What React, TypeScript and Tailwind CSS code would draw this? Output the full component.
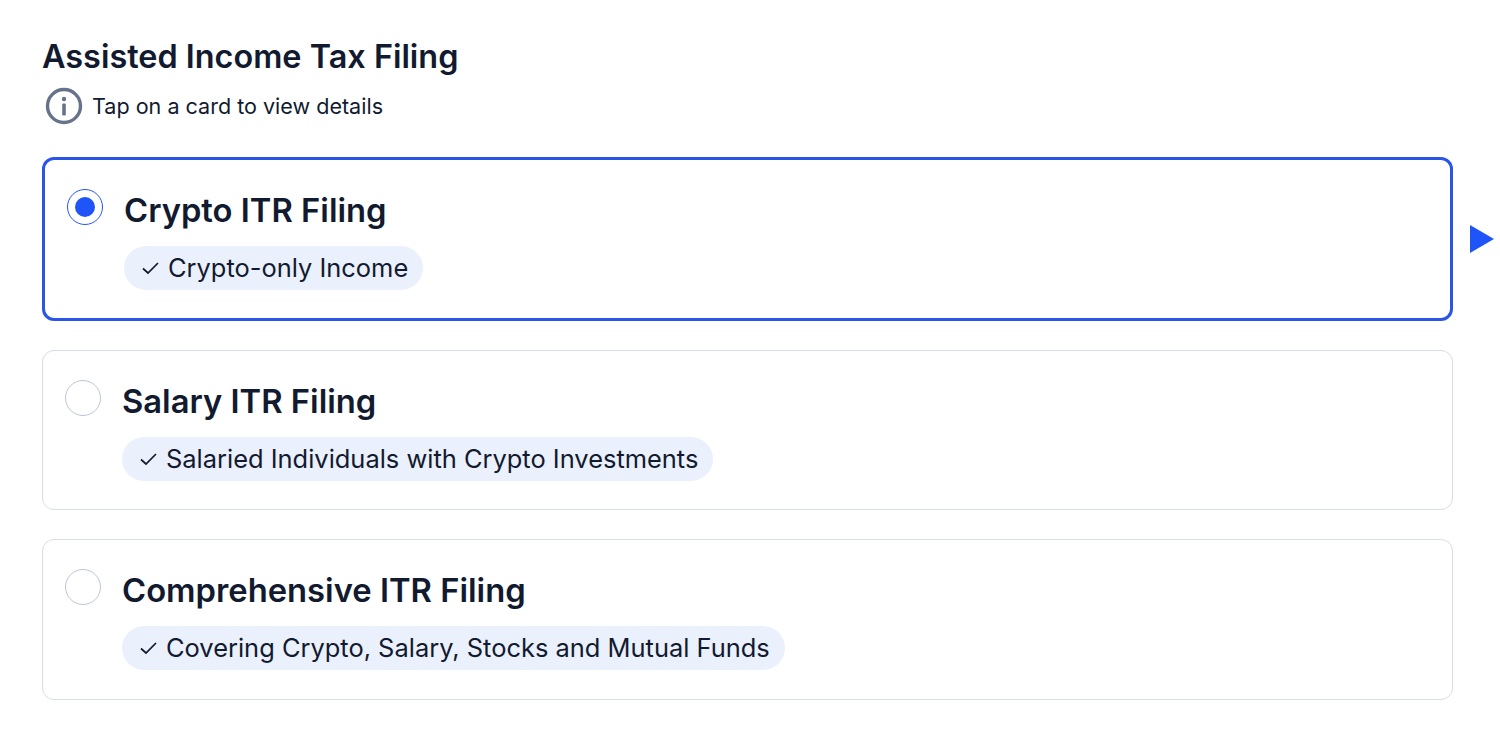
const cards = [
  { title: 'Crypto ITR Filing', tag: 'Crypto-only Income', selected: true, box: 'h-[164px]' },
  { title: 'Salary ITR Filing', tag: 'Salaried Individuals with Crypto Investments', selected: false, box: 'h-[160px]' },
  { title: 'Comprehensive ITR Filing', tag: 'Covering Crypto, Salary, Stocks and Mutual Funds', selected: false, box: 'h-[161px]' },
];

const Check = () => (
  <svg width="17" height="16" viewBox="0 0 17 16" fill="none" stroke="#121a2f" strokeWidth="1.7" className="shrink-0">
    <path d="M1 8.5 L6 13 L16 3" />
  </svg>
);

const Card = ({ title, tag, selected, box }: { title: string; tag: string; selected: boolean; box: string }) => (
  <div className="relative">
    <div
      className={
        selected
          ? `flex ${box} rounded-[12px] border-[3px] border-[#2b55e8] bg-white pl-[22px] pt-[29px]`
          : `flex ${box} rounded-[12px] border border-[#d8dde6] bg-white pl-[22px] pt-[29px]`
      }
    >
      {selected ? (
        <div className="flex h-[36px] w-[36px] shrink-0 items-center justify-center rounded-full border border-[#2456f5]">
          <div className="h-[20px] w-[20px] rounded-full bg-[#1f55f8]" />
        </div>
      ) : (
        <div className="h-[36px] w-[36px] shrink-0 rounded-full border border-[#bcc5d8]" />
      )}
      <div className="ml-[21px] flex flex-col items-start">
        <div className="text-[32.75px] leading-[42px] font-semibold text-[#121a2f]">{title}</div>
        <div className="mt-[15px] flex h-[44px] items-center gap-[9px] rounded-full bg-[#eaf0fc] pl-[18px] pr-[15px] text-[25.45px] text-[#121a2f]">
          <Check />
          <span>{tag}</span>
        </div>
      </div>
    </div>
    {selected && (
      <svg width="24" height="28" viewBox="0 0 24 28" className="absolute left-[1428px] top-[68px]">
        <path d="M0 0 L24 14 L0 28 Z" fill="#1f55f8" />
      </svg>
    )}
  </div>
);

export default function App() {
  return (
    <div className="min-h-[756px] bg-white px-[42px] pt-[36px] font-['Inter',sans-serif]">
      <div className="w-[1411px]">
        <h1 className="text-[32.4px] leading-[42px] font-semibold text-[#121a2f]">Assisted Income Tax Filing</h1>
        <div className="mt-[9px] flex items-center">
          <svg width="38" height="38" viewBox="0 0 38 38" fill="none" className="ml-[3px]">
            <circle cx="19" cy="19" r="16.5" stroke="#66738a" strokeWidth="3.4" />
            <circle cx="19" cy="12" r="2.2" fill="#66738a" />
            <rect x="17.2" y="16.5" width="3.6" height="12" rx="1" fill="#66738a" />
          </svg>
          <span className="ml-[9px] text-[21.55px] text-[#121a2f]">Tap on a card to view details</span>
        </div>
        <div className="mt-[32px] flex flex-col gap-[29px]">
          {cards.map((card) => (
            <Card key={card.title} {...card} />
          ))}
        </div>
      </div>
    </div>
  );
}
